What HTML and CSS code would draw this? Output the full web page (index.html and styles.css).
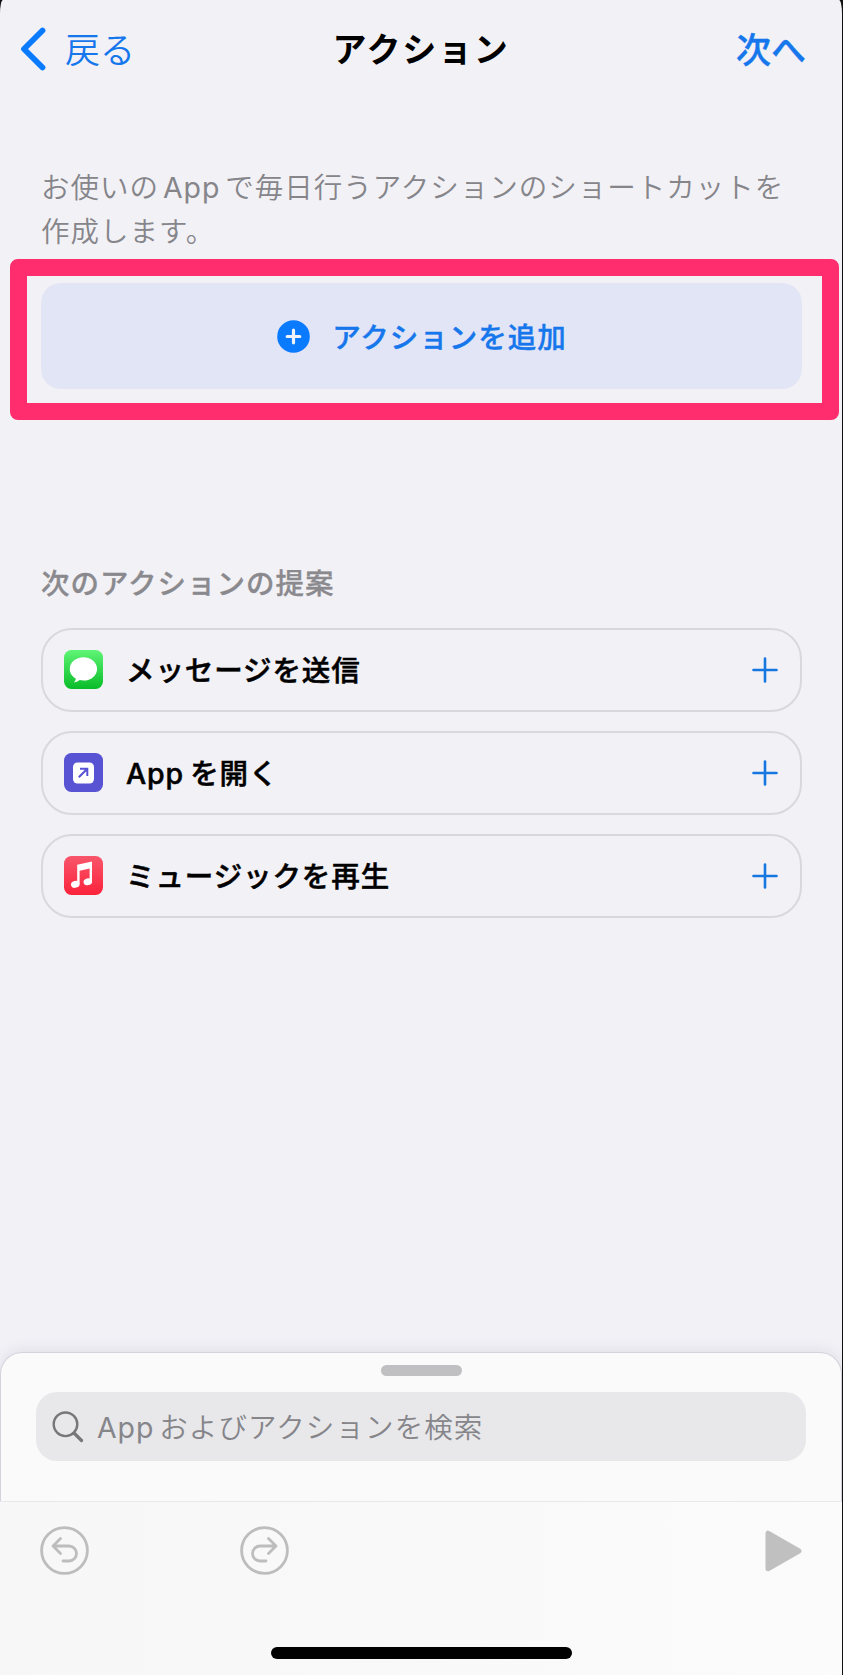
FILE: index.html
```html
<!DOCTYPE html>
<html lang="ja">
<head>
    <meta charset="UTF-8">
    <meta name="viewport" content="width=device-width, initial-scale=1.0">
    <title>アクション</title>
    <link rel="stylesheet" href="styles.css">
</head>
<body>
    <div class="screen">
        <header class="navbar">
            <a class="back">
                <svg width="26" height="44" viewBox="0 0 26 44"><path d="M22.5 3.5 L4 22 L22.5 40.5" fill="none" stroke="#0a7aff" stroke-width="5.8" stroke-linecap="round" stroke-linejoin="round"/></svg>
                <span>戻る</span>
            </a>
            <h1>アクション</h1>
            <a class="next">次へ</a>
        </header>

        <main class="content">
            <p class="description">お使いの<span class="latin">App</span>で毎日行うアクションのショートカットを<br>作成します。</p>

            <div class="add-wrap">
                <button type="button" class="add-button">
                    <svg width="33" height="33" viewBox="0 0 33 33"><circle cx="16.5" cy="16.5" r="16.3" fill="#0a7aff"/><path d="M16.5 10.2v12.6M10.2 16.5h12.6" stroke="#f1f3fb" stroke-width="3.2" stroke-linecap="round"/></svg>
                    <span>アクションを追加</span>
                </button>
                <div class="highlight"></div>
            </div>

            <h2>次のアクションの提案</h2>
            <ul class="suggestions">
                <li>
                    <svg class="app-icon" viewBox="0 0 39 39">
                        <defs><linearGradient id="green" x1="0" y1="0" x2="0" y2="1"><stop offset="0" stop-color="#5ff576"/><stop offset="1" stop-color="#09bc28"/></linearGradient></defs>
                        <rect width="39" height="39" rx="7.5" fill="url(#green)"/>
                        <path d="M19.5 7.2C12 7.2 5.8 12.2 5.8 18.9c0 4 2.3 7.5 6 9.6-.2 1.6-.8 2.8-1.9 4 2.5-.2 4.3-1.2 5.8-2.4 1.2.3 2.5.5 3.8.5 7.6 0 13.6-5.2 13.6-11.7S27.1 7.2 19.5 7.2z" fill="#fff"/>
                    </svg>
                    <span class="label">メッセージを送信</span>
                    <svg class="plus" viewBox="0 0 26 26"><path d="M13 1.5v23M1.5 13h23"/></svg>
                </li>
                <li>
                    <svg class="app-icon" viewBox="0 0 39 39">
                        <rect width="39" height="39" rx="7.5" fill="#5853d3"/>
                        <rect x="9" y="9.5" width="21" height="21" rx="4.5" fill="#fff"/>
                        <path d="M14.8 24.2l8-8M16 15.8h7.3v7.3" fill="none" stroke="#5853d3" stroke-width="2"/>
                    </svg>
                    <span class="label"><span class="latin">App</span>を開く</span>
                    <svg class="plus" viewBox="0 0 26 26"><path d="M13 1.5v23M1.5 13h23"/></svg>
                </li>
                <li>
                    <svg class="app-icon" viewBox="0 0 39 39">
                        <defs><linearGradient id="red" x1="0" y1="0" x2="0" y2="1"><stop offset="0" stop-color="#f8566b"/><stop offset="1" stop-color="#fb233b"/></linearGradient></defs>
                        <rect width="39" height="39" rx="7.5" fill="url(#red)"/>
                        <path d="M13.2 8.7L28 5.5v19.6h-2.4V12.6l-10 2.2v12.9h-2.4z" fill="#fff"/>
                        <ellipse cx="11.3" cy="28.3" rx="4.4" ry="3.4" transform="rotate(-15 11.3 28.3)" fill="#fff"/>
                        <ellipse cx="23.8" cy="25.8" rx="4.3" ry="3.4" transform="rotate(-15 23.8 25.8)" fill="#fff"/>
                    </svg>
                    <span class="label">ミュージックを再生</span>
                    <svg class="plus" viewBox="0 0 26 26"><path d="M13 1.5v23M1.5 13h23"/></svg>
                </li>
            </ul>
        </main>

        <section class="sheet">
            <div class="grabber"></div>
            <div class="search">
                <svg width="32" height="32" viewBox="0 0 32 32"><g fill="none" stroke="#77777b" stroke-linecap="round"><circle cx="13.5" cy="13.3" r="11.8" stroke-width="2.4"/><path d="M22 22l7.5 7.5" stroke-width="3.2"/></g></svg>
                <span><span class="latin">App</span>およびアクションを検索</span>
            </div>
        </section>

        <footer class="toolbar">
            <div class="tools">
                <svg width="49" height="49" viewBox="0 0 49 49"><circle cx="24.5" cy="24.5" r="22.9"/><path d="M20.5 12.5l-7.5 7.5 7.5 7.5M13.5 20H29a7.5 7.5 0 0 1 0 15H23"/></svg>
                <svg width="49" height="49" viewBox="0 0 49 49"><circle cx="24.5" cy="24.5" r="22.9"/><path d="M28.5 12.5l7.5 7.5-7.5 7.5M35.5 20H20a7.5 7.5 0 0 0 0 15H26"/></svg>
                <svg class="play" width="37" height="42" viewBox="0 0 37 42"><path d="M3 3.2v35.6L34 21z"/></svg>
            </div>
            <div class="home-bar"></div>
        </footer>
    </div>
</body>
</html>
```
FILE: styles.css
```css
* {
    box-sizing: border-box;
}
body {
    margin: 0;
    background-color: #111;
    font-family: Inter, "Noto Sans CJK JP", sans-serif;
}
.screen {
    display: flex;
    flex-direction: column;
    width: 842px;
    height: 1675px;
    background-color: #f2f1f6;
    border-radius: 3px 3px 0 0 / 14px 14px 0 0;
    overflow: hidden;
}
h1, h2, p, ul {
    margin: 0;
    padding: 0;
}
.latin {
    font-weight: 400;
    letter-spacing: 0.9px;
    margin: 0 5px 0 4px;
}

/* navigation bar */
.navbar {
    display: grid;
    grid-template-columns: 1fr auto 1fr;
    align-items: center;
    height: 98px;
    padding: 0 36px 0 20px;
    font-size: 35px;
    color: #1677ec;
}
.navbar h1 {
    font-size: 34px;
    font-weight: 700;
    letter-spacing: 1.7px;
    color: #000;
    margin-left: 16px;
    padding-bottom: 4px;
}
.back {
    display: flex;
    align-items: center;
    gap: 19px;
    font-weight: 350;
}
.back span {
    padding-bottom: 4px;
}
.next {
    text-align: right;
    font-weight: 500;
    padding-bottom: 4px;
    -webkit-text-stroke: 0.4px;
}

.content {
    flex: 1;
    padding: 68px 40px 0 41px;
}
.description {
    font-size: 28.5px;
    font-weight: 350;
    line-height: 44px;
    letter-spacing: 1px;
    color: #85858a;
    white-space: nowrap;
}
.add-wrap {
    position: relative;
    margin-top: 29px;
}
.add-button {
    display: flex;
    align-items: center;
    justify-content: center;
    gap: 22px;
    width: 100%;
    height: 106px;
    padding: 0 0 0 1px;
    border: none;
    border-radius: 20px;
    background-color: #e2e5f6;
    font: 500 28.5px Inter, "Noto Sans CJK JP", sans-serif;
    letter-spacing: 1px;
    color: #1677ec;
    -webkit-text-stroke: 0.4px;
}
.add-button span {
    padding-bottom: 2px;
}
/* frame drawn over the button */
.highlight {
    position: absolute;
    top: -24px;
    right: -37px;
    bottom: -31px;
    left: -31px;
    border: 17px solid #ff2d6e;
    border-radius: 8px;
}

h2 {
    margin-top: 173px;
    font-size: 28.5px;
    font-weight: 500;
    line-height: 44px;
    letter-spacing: 1px;
    color: #8a8a8e;
    -webkit-text-stroke: 0.3px;
}
.suggestions {
    display: flex;
    flex-direction: column;
    gap: 19px;
    margin-top: 22px;
    list-style: none;
}
.suggestions li {
    display: flex;
    align-items: center;
    height: 84px;
    padding: 0 22px 1px 21px;
    border: 2px solid #d9d8dd;
    border-radius: 31px;
}
.app-icon {
    width: 39px;
    height: 39px;
}
.label {
    flex: 1;
    margin-left: 23px;
    padding-bottom: 2px;
    font-size: 28.5px;
    font-weight: 500;
    letter-spacing: 0.9px;
    -webkit-text-stroke: 0.5px;
}
.label .latin {
    font-weight: 500;
    margin: 0 6px 0 0;
}
.plus {
    width: 26px;
    height: 26px;
    fill: none;
    stroke: #1677e0;
    stroke-width: 2.6;
    stroke-linecap: round;
}

/* bottom sheet */
.sheet {
    height: 149px;
    padding: 12px 35px 0;
    background-color: #fafafa;
    border: 1px solid #d4d3dc;
    border-bottom: none;
    border-radius: 22px 22px 0 0;
    box-shadow: 0 -2px 14px rgba(60, 60, 90, 0.09);
}
.grabber {
    width: 81px;
    height: 11px;
    margin: 0 auto;
    border-radius: 6px;
    background-color: #c0c0c3;
}
.search {
    display: flex;
    align-items: center;
    gap: 13px;
    height: 69px;
    margin-top: 16px;
    padding-left: 16px;
    border-radius: 21px;
    background-color: #e8e8ea;
    font-size: 28.5px;
    font-weight: 350;
    letter-spacing: 1.1px;
    color: #85858a;
}
.search > span {
    padding-bottom: 2px;
}
.search .latin {
    margin-left: 0;
}

.toolbar {
    height: 174px;
    padding: 24px 40px 0;
    border-top: 1px solid #e8e8ea;
    background: linear-gradient(to right, #f7f7f8, #fbfbfc);
    position: relative;
}
.tools {
    display: flex;
    align-items: center;
    gap: 151px;
}
.tools svg {
    fill: none;
    stroke: #bdbdbe;
    stroke-width: 2.8;
    stroke-linecap: round;
    stroke-linejoin: round;
}
.tools .play {
    margin-left: auto;
    fill: #c0c0c0;
    stroke: #c0c0c0;
    stroke-width: 5;
}
.home-bar {
    width: 301px;
    height: 12px;
    margin: 72px auto 0;
    border-radius: 6px;
    background-color: #000;
}
```
